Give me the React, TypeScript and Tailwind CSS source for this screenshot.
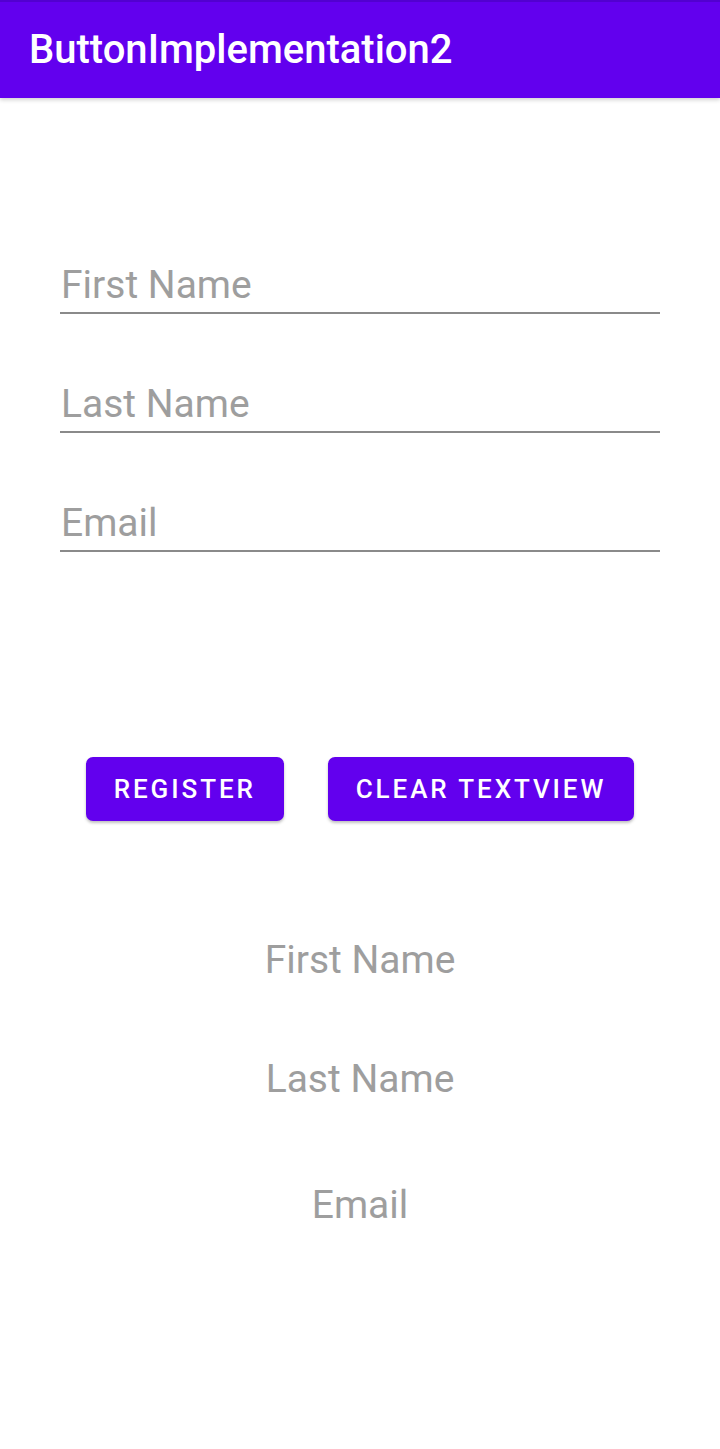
import React from 'react';

const font = { fontFamily: 'Roboto, "Noto Sans", sans-serif' };

function Field({ hint }: { hint: string }) {
  return (
    <div className="border-b-2 border-[#8a8a8a] pb-[8px]">
      <div className="text-[39px] leading-[38px] text-[#9e9e9e] pl-[1px]">{hint}</div>
    </div>
  );
}

export default function App() {
  return (
    <div className="w-[720px] h-[1449px] bg-white relative overflow-hidden" style={font}>
      {/* app bar */}
      <header className="h-[98px] bg-[#6200ee] border-t-2 border-[#5200d0] flex items-center pl-[29px] shadow-[0_2px_4px_rgba(0,0,0,0.18)] relative z-10">
        <h1 className="text-white text-[40px] leading-[40px] font-medium">ButtonImplementation2</h1>
      </header>

      {/* edit texts */}
      <div className="px-[60px] pt-[168px] flex flex-col gap-[71px]">
        <Field hint="First Name" />
        <Field hint="Last Name" />
        <Field hint="Email" />
      </div>

      {/* buttons */}
      <div className="mt-[205px] flex justify-center gap-[44px]">
        <button className="h-[64px] px-[28px] rounded-[7px] bg-[#6200ee] text-white text-[26px] font-medium tracking-[2.9px] shadow-[0_2px_3px_rgba(0,0,0,0.25)]">
          REGISTER
        </button>
        <button className="h-[64px] px-[28px] rounded-[7px] bg-[#6200ee] text-white text-[26px] font-medium tracking-[2.9px] shadow-[0_2px_3px_rgba(0,0,0,0.25)]">
          CLEAR TEXTVIEW
        </button>
      </div>

      {/* text views */}
      <div className="mt-[120px] flex flex-col items-center text-[39px] leading-[38px] text-[#9e9e9e]">
        <div>First Name</div>
        <div className="mt-[81px]">Last Name</div>
        <div className="mt-[88px]">Email</div>
      </div>
    </div>
  );
}
